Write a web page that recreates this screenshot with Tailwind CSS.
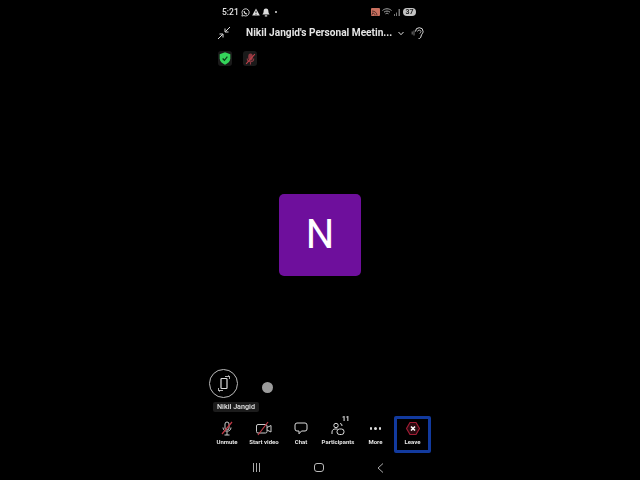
<!DOCTYPE html>
<html lang="en">
<head>
  <meta charset="UTF-8">
  <title>Meeting</title>
  <script src="https://cdn.jsdelivr.net/npm/@tailwindcss/browser@4"></script>
</head>
<body class="bg-black font-['Roboto',sans-serif] overflow-hidden">
<div class="relative mx-auto w-[222px] h-[480px] flex flex-col text-[#e4e4e4] translate-x-[1px] blur-[0.3px]">

  <!-- status bar -->
  <div class="h-[24px] pl-[12px] pr-[16px] flex items-center justify-between">
    <div class="flex items-center gap-[2px] text-[8.5px] font-medium leading-none">
      <span>5:21</span>
      <svg width="9" height="9" viewBox="0 0 10 10" fill="none" stroke="#ddd" stroke-width="1"><path d="M1 9l.6-2.2A4 4 0 1 1 3.200 8.400z"/><path d="M3.500 3.200c0 2 1.300 3.300 3.200 3.500" stroke-width="1.200"/></svg>
      <svg width="8" height="8" viewBox="0 0 10 10"><path d="M5 .5L9.800 9.500H.2z" fill="#ddd"/><path d="M5 3.500v3M5 7.500v1" stroke="#000"/></svg>
      <svg width="8" height="9" viewBox="0 0 10 11"><path d="M5 .5c2.200 0 3 1.700 3 3.500 0 2 .8 3 1.500 4H.5C1.200 7 2 6 2 4 2 2.200 2.800.5 5 .5z" fill="#ddd"/><rect x="3.500" y="9" width="3" height="1.500" fill="#ddd"/></svg>
      <span class="w-[2px] h-[2px] ml-[3px] rounded-full bg-[#ddd]"></span>
    </div>
    <div class="flex items-center gap-[2px]">
      <svg width="9" height="8" viewBox="0 0 9 8"><rect width="9" height="8" rx="1" fill="#c9705f"/><path d="M1 7c0-1 0-1.500 1-1.500M1 5c2 0 3 1 3 2.500M1 3c3 0 5 2 5 4.500" stroke="#3a2220" fill="none" stroke-width=".8"/></svg>
      <svg width="10" height="8" viewBox="0 0 10 8" fill="none" stroke="#aaa" stroke-width="1"><path d="M.5 2.500c2.500-2.300 6.500-2.300 9 0M2 4.200c1.700-1.500 4.300-1.500 6 0M3.500 5.800c.9-.7 2.100-.7 3 0"/></svg>
      <svg width="6" height="7" viewBox="0 0 6 7"><path d="M0 7h1V5H0zM2 7h1V3.500H2zM4.500 7H6V0H4.500z" fill="#777"/></svg>
      <span class="ml-[1px] w-[13px] h-[8px] rounded-full bg-[#c4c4c4] text-[#222] text-[7px] font-bold leading-[8px] text-center">37</span>
    </div>
  </div>

  <!-- meeting title -->
  <div class="h-[18px] pl-[7px] pr-[4px] flex items-center">
    <svg width="14" height="14" viewBox="0 0 14 14" fill="none" stroke="#ddd" stroke-width="1"><path d="M13 1L8.300 5.700M8 2.500V6h3.500M1 13l4.700-4.700M2.500 8H6v3.500"/></svg>
    <span class="ml-[15px] text-[10.150px] font-bold whitespace-nowrap leading-none">Nikil Jangid's Personal Meetin...</span>
    <svg class="ml-[6px]" width="6" height="5" viewBox="0 0 6 5" fill="none" stroke="#ddd" stroke-width="1"><path d="M.5 1L3 3.700 5.500 1"/></svg>
    <svg class="ml-[7px]" width="14" height="14" viewBox="0 0 14 14" fill="none" stroke="#ddd" stroke-width="1"><path d="M4.500 5.500a3.800 3.800 0 0 1 7.600 0c0 2-1.700 2.600-2 4.500-.2 1.700-1.200 2.800-2.500 2.500"/><path d="M6.500 5.500a1.800 1.800 0 0 1 3.500 0c0 1-1 1-1.200 2" stroke-width=".8"/><path d="M1.200 5.500v3M3 4.500v5" stroke="#999" stroke-width=".8"/></svg>
  </div>

  <!-- badges -->
  <div class="mt-[9px] pl-[8px] flex gap-[11px]">
    <div class="w-[14px] h-[15px] rounded-[3px] bg-[#1a1a1a] flex items-center justify-center">
      <svg width="12" height="13" viewBox="0 0 10 11"><path d="M5 .3l4.500 1.500v3.700c0 2.500-2 4.200-4.500 5.200C2.500 9.700.5 8 .5 5.500V1.800z" fill="#34d35a"/><path d="M3 5.500l1.500 1.500L7 4" stroke="#0c3a18" fill="none" stroke-width="1"/></svg>
    </div>
    <div class="w-[14px] h-[15px] rounded-[3px] bg-[#1a1a1a] flex items-center justify-center">
      <svg width="11" height="12" viewBox="0 0 10 11" fill="none" stroke="#8f3a42" stroke-width="1"><rect x="3.500" y="1" width="3" height="5.500" rx="1.500" fill="#8f3a42"/><path d="M2 5c0 4 6 4 6 0M5 8v2.500"/><path d="M1 10L9 1" stroke="#c0404a"/></svg>
    </div>
  </div>

  <!-- avatar -->
  <div class="flex-1 flex items-start justify-center pt-[128px]">
    <div class="-translate-x-[1px] w-[82px] h-[82px] rounded-[5px] bg-[#6e0f9c] flex items-center justify-center text-white text-[40px] leading-none font-normal">N</div>
  </div>

  <!-- floating dot -->
  <div class="absolute left-[52px] top-[382px] w-[11px] h-[11px] rounded-full bg-[#9c9c9c]"></div>

  <!-- switch to thumbnail and name -->
  <div class="pl-[3px] flex flex-col items-start">
    <div class="ml-[-4px] w-[29px] h-[29px] rounded-full border border-[#bbb] flex items-center justify-center">
      <svg width="14" height="17" viewBox="0 0 14 17" fill="none" stroke="#ddd" stroke-width="1"><rect x="4" y="3.500" width="6" height="10" rx=".8" stroke-width="1.200"/><path d="M8 1.500h4.500V4M11 .5l1.500 1M6 15.500H1.500V13M3 16.500l-1.500-1" stroke-width=".8"/></svg>
    </div>
    <div class="mt-[4px] h-[10px] px-[4px] rounded-[2px] bg-[#1c1c1c] text-[7.200px] font-medium leading-[10px] whitespace-nowrap">Nikil Jangid</div>
  </div>

  <!-- toolbar -->
  <div class="mt-[4px] h-[37px] flex text-[6px] font-bold">
    <div class="w-[36px] ml-[-1px] flex flex-col items-center pt-[5px]">
      <svg width="14" height="15" viewBox="0 0 14 15" fill="none" stroke="#ccc" stroke-width="1"><rect x="5" y="1" width="4" height="8" rx="2"/><path d="M3 6.500c0 5 8 5 8 0M7 11v3M4.500 14h5"/><path d="M2 13L12 1" stroke="#c23a46" stroke-width="1.200"/></svg>
      <span class="mt-[3px] whitespace-nowrap leading-none">Unmute</span>
    </div>
    <div class="w-[38px] flex flex-col items-center pt-[5px]">
      <svg width="16" height="15" viewBox="0 0 16 15" fill="none" stroke="#ccc" stroke-width="1"><rect x=".5" y="3.500" width="10.500" height="8.500" rx="1.500"/><path d="M11 6.500l4-2v6.500l-4-2"/><path d="M2 14L12 1" stroke="#c23a46" stroke-width="1.200"/></svg>
      <span class="mt-[3px] whitespace-nowrap leading-none">Start video</span>
    </div>
    <div class="w-[36px] flex flex-col items-center pt-[5px]">
      <svg width="14" height="15" viewBox="0 0 14 15" fill="none" stroke="#ddd" stroke-width="1"><path d="M3 2h8a2 2 0 0 1 2 2v4a2 2 0 0 1-2 2H7.500L5 12.800V10H3a2 2 0 0 1-2-2V4a2 2 0 0 1 2-2z"/></svg>
      <span class="mt-[3px] whitespace-nowrap leading-none">Chat</span>
    </div>
    <div class="relative w-[38px] flex flex-col items-center pt-[5px]">
      <svg width="14" height="15" viewBox="0 0 14 15" fill="none" stroke="#ddd" stroke-width="1"><circle cx="5" cy="4.500" r="2.200"/><path d="M1 13v-2c0-2 1.500-3 3-3h2.500"/><rect x="6" y="8" width="7" height="5.500" rx="2.500"/><path d="M9 2.500a2.200 2.200 0 0 1 2 2.500"/></svg>
      <span class="mt-[3px] whitespace-nowrap leading-none">Participants</span>
      <span class="absolute left-[23px] top-[0px] text-[6.500px] leading-none">11</span>
    </div>
    <div class="w-[37px] flex flex-col items-center pt-[5px]">
      <div class="h-[15px] flex items-center gap-[2px]">
        <span class="w-[2.500px] h-[2.500px] rounded-full bg-[#ddd]"></span>
        <span class="w-[2.500px] h-[2.500px] rounded-full bg-[#ddd]"></span>
        <span class="w-[2.500px] h-[2.500px] rounded-full bg-[#ddd]"></span>
      </div>
      <span class="mt-[3px] whitespace-nowrap leading-none">More</span>
    </div>
    <div class="w-[37px] h-[37px] border-[3px] border-[#123a9e] rounded-[2px] flex flex-col items-center pt-[2px]">
      <svg width="14" height="15" viewBox="0 0 14 15"><path d="M4 1.500h6L13.500 7.500 10 13.500H4L.5 7.500z" fill="#2a0a10" stroke="#a01c34" stroke-width="1.200"/><path d="M5 5.500l4 4M9 5.500l-4 4" stroke="#fff" stroke-width="1.600"/></svg>
      <span class="mt-[3px] whitespace-nowrap leading-none">Leave</span>
    </div>
  </div>

  <!-- android nav -->
  <div class="h-[27px] flex items-start pt-[10px]">
    <div class="ml-[43px] flex gap-[2px]">
      <span class="w-[1px] h-[9px] bg-[#aaa]"></span>
      <span class="w-[1px] h-[9px] bg-[#aaa]"></span>
      <span class="w-[1px] h-[9px] bg-[#aaa]"></span>
    </div>
    <div class="ml-[54px] w-[10px] h-[9px] rounded-[3px] border border-[#bbb]"></div>
    <svg class="ml-[53px]" width="7" height="10" viewBox="0 0 7 10" fill="none" stroke="#aaa" stroke-width="1"><path d="M6 .5L1 5l5 4.500"/></svg>
  </div>
</div>
</body>
</html>
